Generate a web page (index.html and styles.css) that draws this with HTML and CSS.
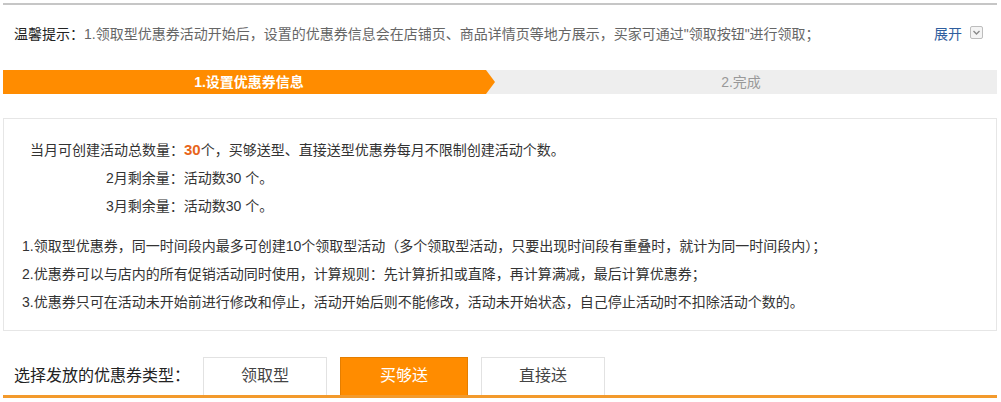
FILE: index.html
```html
<!DOCTYPE html>
<html lang="zh-CN">
<head>
<meta charset="utf-8">
<title>设置优惠券信息</title>
<link rel="stylesheet" href="styles.css">
</head>
<body>
<div class="page">
  <div class="tip">
    <p class="tip-text"><span class="tip-label">温馨提示：</span>1.领取型优惠券活动开始后，设置的优惠券信息会在店铺页、商品详情页等地方展示，买家可通过"领取按钮"进行领取；</p>
    <a class="expand">展开 <svg class="expand-icon" width="13" height="13" viewBox="0 0 13 13"><rect x="0.5" y="0.5" width="12" height="12" rx="1.5" fill="#f4f4f4" stroke="#bdbdbd"/><path d="M3.5 5 L6.5 8 L9.5 5" fill="none" stroke="#8a8a8a" stroke-width="1.4"/></svg></a>
  </div>

  <div class="steps">
    <div class="step step-active">1.设置优惠券信息</div>
    <div class="step step-next">2.完成</div>
  </div>

  <div class="info">
    <div class="summary">
      <p class="line">当月可创建活动总数量：<b class="num">30</b>个，买够送型、直接送型优惠券每月不限制创建活动个数。</p>
      <p class="line sub">2月剩余量：活动数30 个。</p>
      <p class="line sub">3月剩余量：活动数30 个。</p>
    </div>
    <div class="notes">
      <p class="line">1.领取型优惠券，同一时间段内最多可创建10个领取型活动（多个领取型活动，只要出现时间段有重叠时，就计为同一时间段内）；</p>
      <p class="line">2.优惠券可以与店内的所有促销活动同时使用，计算规则：先计算折扣或直降，再计算满减，最后计算优惠券；</p>
      <p class="line">3.优惠券只可在活动未开始前进行修改和停止，活动开始后则不能修改，活动未开始状态，自己停止活动时不扣除活动个数的。</p>
    </div>
  </div>

  <div class="types">
    <span class="types-label">选择发放的优惠券类型：</span>
    <div class="tabs">
      <span class="tab">领取型</span>
      <span class="tab tab-active">买够送</span>
      <span class="tab">直接送</span>
    </div>
  </div>
</div>
</body>
</html>
```

FILE: styles.css
```css
* { box-sizing: border-box; }
html, body { margin: 0; padding: 0; background: #fff; }
body {
  font-family: "Liberation Sans", "Noto Sans CJK SC", sans-serif;
  font-size: 14px;
  color: #333;
}
p { margin: 0; }
.page {
  margin: 3px 4px 0 3px;
}
.tip {
  border-top: 2px solid #c6c6c6;
  height: 57px;
  display: flex;
  align-items: center;
  justify-content: space-between;
  padding: 0 14px 0 11px;
}
.tip-text { color: #666; font-size: 14px; }
.tip-label { color: #222; }
.expand {
  color: #2f5e9e;
  font-size: 14px;
  display: flex;
  align-items: center;
  gap: 8px;
}
.expand-icon { display: block; }

.steps {
  margin-top: 10px;
  height: 24px;
  display: grid;
  grid-template-columns: 492px 1fr;
  background: #eeeeee;
  font-size: 14px;
  line-height: 24px;
}
.step { text-align: center; }
.step-active {
  background: #ff8c00;
  color: #fff;
  font-weight: bold;
  clip-path: polygon(0 0, calc(100% - 9px) 0, 100% 50%, calc(100% - 9px) 100%, 0 100%);
}
.step-next { color: #999; padding-right: 10px; }

.info {
  margin-top: 24px;
  border: 1px solid #e6e6e6;
  padding: 17px 18px 14px 18px;
  line-height: 28px;
}
.summary { padding-left: 8px; }
.sub { padding-left: 76px; }
.num { color: #e8651a; font-weight: bold; font-size: 15px; }
.notes { margin-top: 12px; }

.types {
  margin-top: 26px;
  display: flex;
  align-items: flex-end;
  border-bottom: 3px solid #f39a2c;
  padding-left: 11px;
  font-size: 16px;
}
.types-label {
  color: #222;
  line-height: 38px;
  width: 189px;
}
.tabs { display: flex; gap: 13px; }
.tab {
  width: 124px;
  height: 38px;
  line-height: 36px;
  text-align: center;
  border: 1px solid #e2e2e2;
  border-bottom: none;
  color: #444;
  background: #fff;
}
.tab-active {
  width: 128px;
  background: #ff8c00;
  border-color: #e57e00;
  color: #fff;
}
```
